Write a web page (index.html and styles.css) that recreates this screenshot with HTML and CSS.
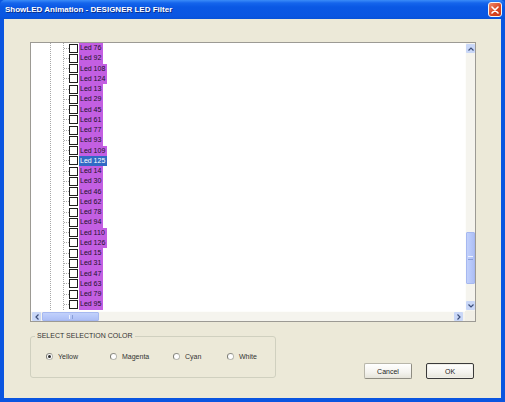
FILE: index.html
```html
<!DOCTYPE html>
<html>
<head>
<meta charset="utf-8">
<link rel="stylesheet" href="styles.css">
</head>
<body>
<div class="window">
  <div class="titlebar">
    <span class="title">ShowLED Animation - DESIGNER LED Filter</span>
    <span class="close"><svg width="8" height="8" viewBox="0 0 8 8"><path d="M1 1L7 7M7 1L1 7" stroke="#fff" stroke-width="1.6" stroke-linecap="round"/></svg></span>
  </div>
  <div class="client">
    <div class="listbox">
      <div class="tree">
        <div class="row"><span class="stub"></span><span class="chk"></span><span class="lbl">Led 76</span></div>
        <div class="row"><span class="stub"></span><span class="chk"></span><span class="lbl">Led 92</span></div>
        <div class="row"><span class="stub"></span><span class="chk"></span><span class="lbl">Led 108</span></div>
        <div class="row"><span class="stub"></span><span class="chk"></span><span class="lbl">Led 124</span></div>
        <div class="row"><span class="stub"></span><span class="chk"></span><span class="lbl">Led 13</span></div>
        <div class="row"><span class="stub"></span><span class="chk"></span><span class="lbl">Led 29</span></div>
        <div class="row"><span class="stub"></span><span class="chk"></span><span class="lbl">Led 45</span></div>
        <div class="row"><span class="stub"></span><span class="chk"></span><span class="lbl">Led 61</span></div>
        <div class="row"><span class="stub"></span><span class="chk"></span><span class="lbl">Led 77</span></div>
        <div class="row"><span class="stub"></span><span class="chk"></span><span class="lbl">Led 93</span></div>
        <div class="row"><span class="stub"></span><span class="chk"></span><span class="lbl">Led 109</span></div>
        <div class="row"><span class="stub"></span><span class="chk"></span><span class="lbl sel">Led 125</span></div>
        <div class="row"><span class="stub"></span><span class="chk"></span><span class="lbl">Led 14</span></div>
        <div class="row"><span class="stub"></span><span class="chk"></span><span class="lbl">Led 30</span></div>
        <div class="row"><span class="stub"></span><span class="chk"></span><span class="lbl">Led 46</span></div>
        <div class="row"><span class="stub"></span><span class="chk"></span><span class="lbl">Led 62</span></div>
        <div class="row"><span class="stub"></span><span class="chk"></span><span class="lbl">Led 78</span></div>
        <div class="row"><span class="stub"></span><span class="chk"></span><span class="lbl">Led 94</span></div>
        <div class="row"><span class="stub"></span><span class="chk"></span><span class="lbl">Led 110</span></div>
        <div class="row"><span class="stub"></span><span class="chk"></span><span class="lbl">Led 126</span></div>
        <div class="row"><span class="stub"></span><span class="chk"></span><span class="lbl">Led 15</span></div>
        <div class="row"><span class="stub"></span><span class="chk"></span><span class="lbl">Led 31</span></div>
        <div class="row"><span class="stub"></span><span class="chk"></span><span class="lbl">Led 47</span></div>
        <div class="row"><span class="stub"></span><span class="chk"></span><span class="lbl">Led 63</span></div>
        <div class="row"><span class="stub"></span><span class="chk"></span><span class="lbl">Led 79</span></div>
        <div class="row"><span class="stub"></span><span class="chk"></span><span class="lbl">Led 95</span></div>
      </div>
      <div class="vscroll">
        <span class="sbtn"><svg width="6" height="4" viewBox="0 0 6 4"><path d="M0.5 3.5L3 1L5.5 3.5" fill="none" stroke="#3d4f7a" stroke-width="1.2"/></svg></span>
        <span class="vtrack"><span class="vthumb"><span class="grip"></span></span></span>
        <span class="sbtn"><svg width="6" height="4" viewBox="0 0 6 4"><path d="M0.5 0.5L3 3L5.5 0.5" fill="none" stroke="#3d4f7a" stroke-width="1.2"/></svg></span>
      </div>
      <div class="hscroll">
        <span class="sbtn"><svg width="4" height="6" viewBox="0 0 4 6"><path d="M3.5 0.5L1 3L3.5 5.5" fill="none" stroke="#3d4f7a" stroke-width="1.2"/></svg></span>
        <span class="htrack"><span class="hthumb"><span class="hgrip"></span></span></span>
        <span class="sbtn"><svg width="4" height="6" viewBox="0 0 4 6"><path d="M0.5 0.5L3 3L0.5 5.5" fill="none" stroke="#3d4f7a" stroke-width="1.2"/></svg></span>
      </div>
      <div class="corner"></div>
    </div>
    <div class="bottom">
      <fieldset class="group">
        <legend>SELECT SELECTION COLOR</legend>
        <div class="radios">
          <span class="ritem"><span class="radio on"></span>Yellow</span>
          <span class="ritem"><span class="radio"></span>Magenta</span>
          <span class="ritem"><span class="radio"></span>Cyan</span>
          <span class="ritem"><span class="radio"></span>White</span>
        </div>
      </fieldset>
      <div class="buttons">
        <span class="btn">Cancel</span>
        <span class="btn default">OK</span>
      </div>
    </div>
  </div>
</div>
</body>
</html>
```

FILE: styles.css
```css
html, body {
  margin: 0;
  padding: 0;
  background: #ffffff;
}
.window {
  width: 505px;
  height: 402px;
  box-sizing: border-box;
  padding: 0 4px 4px 4px;
  background: #0a55e0;
  display: flex;
  flex-direction: column;
  font-family: "Liberation Sans", Arial, sans-serif;
}
.titlebar {
  height: 20px;
  margin: 0 -4px;
  padding: 0 3px 0 5px;
  display: flex;
  align-items: center;
  justify-content: space-between;
  background: linear-gradient(to bottom, #3b8cf8 0px, #1565ec 3px, #0a58e4 7px, #0a56e2 16px, #0850d4 20px);
  border-radius: 5px 5px 0 0;
}
.title {
  color: #ffffff;
  font-weight: bold;
  font-size: 8px;
  letter-spacing: 0px;
  text-shadow: 1px 1px 0 #0a2f8a;
}
.close {
  width: 14px;
  height: 15px;
  box-sizing: border-box;
  border: 1px solid #f4f4f4;
  border-radius: 3px;
  background: linear-gradient(135deg, #f08a6c, #d9431e 60%, #c7391a);
  display: flex;
  align-items: center;
  justify-content: center;
}
.client {
  flex: 1;
  background: #ece9d8;
  padding: 23px 25px 19px 26px;
  display: flex;
  flex-direction: column;
}
.listbox {
  height: 280px;
  box-sizing: border-box;
  border: 1px solid #9c9a94;
  background: #ffffff;
  display: grid;
  grid-template-columns: 1fr 10px;
  grid-template-rows: 1fr 10px;
  overflow: hidden;
}
.tree {
  overflow: hidden;
  padding-top: 0;
  background-image:
    repeating-linear-gradient(to bottom, #a8a8a8 0 1px, transparent 1px 2px),
    repeating-linear-gradient(to bottom, #a8a8a8 0 1px, transparent 1px 2px);
  background-size: 1px 100%, 1px 100%;
  background-position: 19px 0, 32px 0;
  background-repeat: no-repeat;
}
.row {
  height: 10.25px;
  display: flex;
  align-items: center;
  padding-left: 33px;
}
.stub {
  width: 5px;
  height: 0;
  border-top: 1px dotted #a8a8a8;
}
.chk {
  width: 9px;
  height: 9px;
  box-sizing: border-box;
  border: 1.5px solid #1e1e1e;
  background: #ffffff;
}
.lbl {
  height: 10.25px;
  line-height: 10.25px;
  font-size: 7px;
  color: #20122a;
  background: #c35fe2;
  padding: 0 2px 0 1px;
  margin-left: 1px;
}
.lbl.sel {
  background: #316ac5;
  color: #ffffff;
}
.vscroll {
  display: flex;
  flex-direction: column;
  background: #f5f4ee;
  border-left: 1px solid #fdfdfb;
}
.hscroll {
  display: flex;
  background: #f5f4ee;
  border-top: 1px solid #fdfdfb;
}
.corner {
  background: #f1efe6;
}
.sbtn {
  flex: none;
  width: 9px;
  height: 9px;
  margin: 0 auto;
  background: #c9d7f7;
  border-radius: 1px;
  display: flex;
  align-items: center;
  justify-content: center;
}
.vscroll .sbtn:first-child {
  margin-top: 1px;
}
.vscroll .sbtn:last-child {
  margin-bottom: 1px;
}
.hscroll .sbtn {
  margin: 0;
}
.hscroll .sbtn:first-child {
  margin-left: 1px;
}
.hscroll .sbtn:last-child {
  margin-right: 2px;
}
.vtrack {
  flex: 1;
  display: flex;
  flex-direction: column;
  justify-content: flex-end;
  padding-bottom: 17px;
}
.vthumb {
  height: 50px;
  margin: 0 0;
  background: linear-gradient(to right, #c3d1fa, #b7c8fa 50%, #aebff4);
  border: 1px solid #a6b8f0;
  border-radius: 1px;
  display: flex;
  align-items: center;
  justify-content: center;
}
.grip {
  width: 5px;
  height: 2px;
  border-top: 1px solid #eef2fe;
  border-bottom: 1px solid #8a9fd8;
}
.htrack {
  flex: 1;
  display: flex;
  padding-left: 1px;
}
.hthumb {
  width: 55px;
  background: linear-gradient(to bottom, #c3d1fa, #b7c8fa 50%, #aebff4);
  border: 1px solid #a6b8f0;
  border-radius: 1px;
  display: flex;
  align-items: center;
  justify-content: center;
}
.hgrip {
  width: 2px;
  height: 4px;
  border-left: 1px solid #eef2fe;
  border-right: 1px solid #8a9fd8;
}
.bottom {
  margin-top: 10px;
  display: flex;
  align-items: flex-start;
}
.group {
  width: 246px;
  height: 46px;
  box-sizing: border-box;
  margin: 0;
  padding: 0;
  border: 1px solid #d0d0bf;
  border-radius: 3px;
}
.group legend {
  font-size: 7px;
  line-height: 8px;
  color: #333333;
  padding: 0 2px;
  margin-left: 4px;
}
.radios {
  display: grid;
  grid-template-columns: 64px 63px 54px auto;
  padding-left: 15px;
  margin-top: 13px;
  font-size: 7px;
  color: #333333;
}
.ritem {
  display: flex;
  align-items: center;
  gap: 5px;
}
.radio {
  width: 7px;
  height: 7px;
  box-sizing: border-box;
  border-radius: 50%;
  border: 1px solid #b8b8b0;
  border-left-color: #7a7a72;
  border-top-color: #8e8e86;
  background: #ffffff;
  display: flex;
  align-items: center;
  justify-content: center;
}
.radio.on::after {
  content: "";
  width: 3px;
  height: 3px;
  border-radius: 50%;
  background: #2a2a2a;
}
.buttons {
  margin-left: auto;
  margin-right: 2px;
  margin-top: 31px;
  display: flex;
  gap: 14px;
}
.btn {
  width: 48px;
  height: 16px;
  box-sizing: border-box;
  border: 1px solid #b8b6aa;
  border-right-color: #8e8c82;
  border-bottom-color: #8e8c82;
  border-radius: 2px;
  background: linear-gradient(to bottom, #ffffff, #f4f3ee 60%, #e6e4da);
  font-size: 7px;
  color: #222222;
  display: flex;
  align-items: center;
  justify-content: center;
}
.btn.default {
  border: 1px solid #3a3a3a;
  box-shadow: inset 0 0 0 1px #f0efe8;
}
```
